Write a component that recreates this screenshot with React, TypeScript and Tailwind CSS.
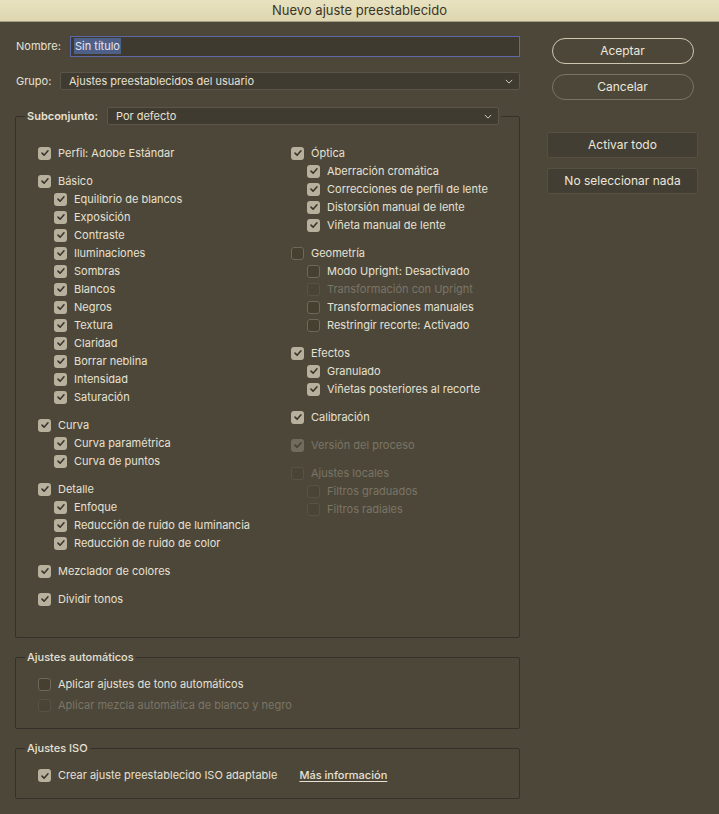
import { ReactNode } from "react";

type Item = { label: string; checked?: boolean; disabled?: boolean; sub?: boolean };

const leftGroups: Item[][] = [
  [{ label: "Perfil: Adobe Estándar", checked: true }],
  [
    { label: "Básico", checked: true },
    { label: "Equilibrio de blancos", checked: true, sub: true },
    { label: "Exposición", checked: true, sub: true },
    { label: "Contraste", checked: true, sub: true },
    { label: "Iluminaciones", checked: true, sub: true },
    { label: "Sombras", checked: true, sub: true },
    { label: "Blancos", checked: true, sub: true },
    { label: "Negros", checked: true, sub: true },
    { label: "Textura", checked: true, sub: true },
    { label: "Claridad", checked: true, sub: true },
    { label: "Borrar neblina", checked: true, sub: true },
    { label: "Intensidad", checked: true, sub: true },
    { label: "Saturación", checked: true, sub: true },
  ],
  [
    { label: "Curva", checked: true },
    { label: "Curva paramétrica", checked: true, sub: true },
    { label: "Curva de puntos", checked: true, sub: true },
  ],
  [
    { label: "Detalle", checked: true },
    { label: "Enfoque", checked: true, sub: true },
    { label: "Reducción de ruido de luminancia", checked: true, sub: true },
    { label: "Reducción de ruido de color", checked: true, sub: true },
  ],
  [{ label: "Mezclador de colores", checked: true }],
  [{ label: "Dividir tonos", checked: true }],
];

const rightGroups: Item[][] = [
  [
    { label: "Óptica", checked: true },
    { label: "Aberración cromática", checked: true, sub: true },
    { label: "Correcciones de perfil de lente", checked: true, sub: true },
    { label: "Distorsión manual de lente", checked: true, sub: true },
    { label: "Viñeta manual de lente", checked: true, sub: true },
  ],
  [
    { label: "Geometría" },
    { label: "Modo Upright: Desactivado", sub: true },
    { label: "Transformación con Upright", sub: true, disabled: true },
    { label: "Transformaciones manuales", sub: true },
    { label: "Restringir recorte: Activado", sub: true },
  ],
  [
    { label: "Efectos", checked: true },
    { label: "Granulado", checked: true, sub: true },
    { label: "Viñetas posteriores al recorte", checked: true, sub: true },
  ],
  [{ label: "Calibración", checked: true }],
  [{ label: "Versión del proceso", checked: true, disabled: true }],
  [
    { label: "Ajustes locales", disabled: true },
    { label: "Filtros graduados", sub: true, disabled: true },
    { label: "Filtros radiales", sub: true, disabled: true },
  ],
];

const Box = ({ checked, disabled }: { checked?: boolean; disabled?: boolean }) => (
  <span
    className={`flex h-[13px] w-[13px] shrink-0 items-center justify-center rounded-[3px] ${
      checked ? "bg-[#b6b09c]" : "border border-[#6d685a] bg-[#45402f]"
    } ${disabled ? "opacity-35" : ""}`}
  >
    {checked && (
      <svg viewBox="0 0 12 12" className="h-[10px] w-[10px]">
        <path d="M2.4 6.2 L4.9 8.6 L9.6 3.4" fill="none" stroke="#3a362b" strokeWidth="1.9" strokeLinecap="round" strokeLinejoin="round" />
      </svg>
    )}
  </span>
);

const Check = ({ item }: { item: Item }) => (
  <div className={`flex h-[18px] items-center gap-[7px] ${item.sub ? "pl-[16px]" : ""}`}>
    <Box checked={item.checked} disabled={item.disabled} />
    <span className={item.disabled ? "text-[#7a7565]" : "text-[#e6e1d3]"}>{item.label}</span>
  </div>
);

const Column = ({ groups }: { groups: Item[][] }) => (
  <div className="flex flex-col gap-[10px]">
    {groups.map((g) => (
      <div key={g[0].label}>
        {g.map((item) => (
          <Check key={item.label} item={item} />
        ))}
      </div>
    ))}
  </div>
);

const Chevron = () => (
  <svg viewBox="0 0 10 6" className="h-[5px] w-[8px]">
    <path d="M1 1 L5 5 L9 1" fill="none" stroke="#d8d2c0" strokeWidth="1.2" />
  </svg>
);

const Select = ({ value, className }: { value: string; className: string }) => (
  <div
    className={`flex h-[18px] items-center justify-between rounded-[2px] border border-[#5a5548] bg-[#403b30] pl-[8px] pr-[6px] text-[#e6e1d3] ${className}`}
  >
    <span>{value}</span>
    <Chevron />
  </div>
);

const Group = ({ legend, children, className }: { legend: ReactNode; children: ReactNode; className?: string }) => (
  <fieldset className={`rounded-[2px] border border-[#35312a] ${className ?? ""}`}>
    <legend className="ml-[9px] px-[2px]">{legend}</legend>
    <div className="pl-[22px]">{children}</div>
  </fieldset>
);

export default function App() {
  return (
    <div
      className="h-[814px] w-[719px] overflow-hidden bg-[#4d473a] text-[11px] text-[#e6e1d3]"
      style={{ fontFamily: "Inter, 'Noto Sans', sans-serif" }}
    >
      {/* Title bar */}
      <div className="flex h-[22px] items-center justify-center border-b border-[#a59f82] bg-gradient-to-b from-[#e8e2c0] to-[#ddd6b0] text-[13px] text-[#3a3527]">
        Nuevo ajuste preestablecido
      </div>

      <div className="flex gap-[27px] pl-[15px] pt-[14px]">
        {/* Left side */}
        <div className="w-[505px]">
          <div className="flex h-[20px] items-center">
            <span className="w-[55px] pl-[1px]">Nombre:</span>
            <div className="flex h-[21px] flex-1 items-center border border-[#5d68a8] bg-[#3f3a2f] px-[3px]">
              <span className="bg-[#4f6088] px-[1px] text-[#e8e6ee]">Sin título</span>
            </div>
          </div>

          <div className="mt-[16px] flex items-center">
            <span className="w-[45px] pl-[1px]">Grupo:</span>
            <Select value="Ajustes preestablecidos del usuario" className="flex-1" />
          </div>

          <Group
            className="mt-[17px] h-[531px]"
            legend={
              <div className="flex items-center">
                <span className="font-semibold">Subconjunto:</span>
                <Select value="Por defecto" className="ml-[9px] w-[392px]" />
              </div>
            }
          >
            <div className="mt-[19px] flex">
              <div className="w-[253px]">
                <Column groups={leftGroups} />
              </div>
              <Column groups={rightGroups} />
            </div>
          </Group>

          <Group className="mt-[11px] h-[80px]" legend={<span className="font-medium">Ajustes automáticos</span>}>
            <div className="mt-[8px]">
              <div className="flex h-[21px] items-center gap-[7px]">
                <Box />
                <span>Aplicar ajustes de tono automáticos</span>
              </div>
              <div className="flex h-[21px] items-center gap-[7px]">
                <Box disabled />
                <span className="text-[#7a7565]">Aplicar mezcla automática de blanco y negro</span>
              </div>
            </div>
          </Group>

          <Group className="mt-[11px] h-[59px]" legend={<span className="font-medium">Ajustes ISO</span>}>
            <div className="mt-[10px] flex h-[18px] items-center gap-[7px]">
              <Box checked />
              <span>Crear ajuste preestablecido ISO adaptable</span>
              <span className="ml-[15px] font-medium underline underline-offset-2">Más información</span>
            </div>
          </Group>
        </div>

        {/* Right buttons */}
        <div className="flex w-[151px] flex-col items-center pt-[2px]">
          <button className="h-[26px] w-[142px] rounded-full border border-[#cfc8b0] text-[12px] text-[#ece7da]">
            Aceptar
          </button>
          <button className="mt-[10px] h-[26px] w-[142px] rounded-full border border-[#7a7462] text-[12px] text-[#ece7da]">
            Cancelar
          </button>
          <button className="mt-[32px] h-[26px] w-[151px] rounded-[2px] border border-[#55503f] bg-[#433e33] text-[12px] text-[#ece7da]">
            Activar todo
          </button>
          <button className="mt-[10px] h-[26px] w-[151px] rounded-[2px] border border-[#55503f] bg-[#433e33] text-[12px] text-[#ece7da]">
            No seleccionar nada
          </button>
        </div>
      </div>
    </div>
  );
}
